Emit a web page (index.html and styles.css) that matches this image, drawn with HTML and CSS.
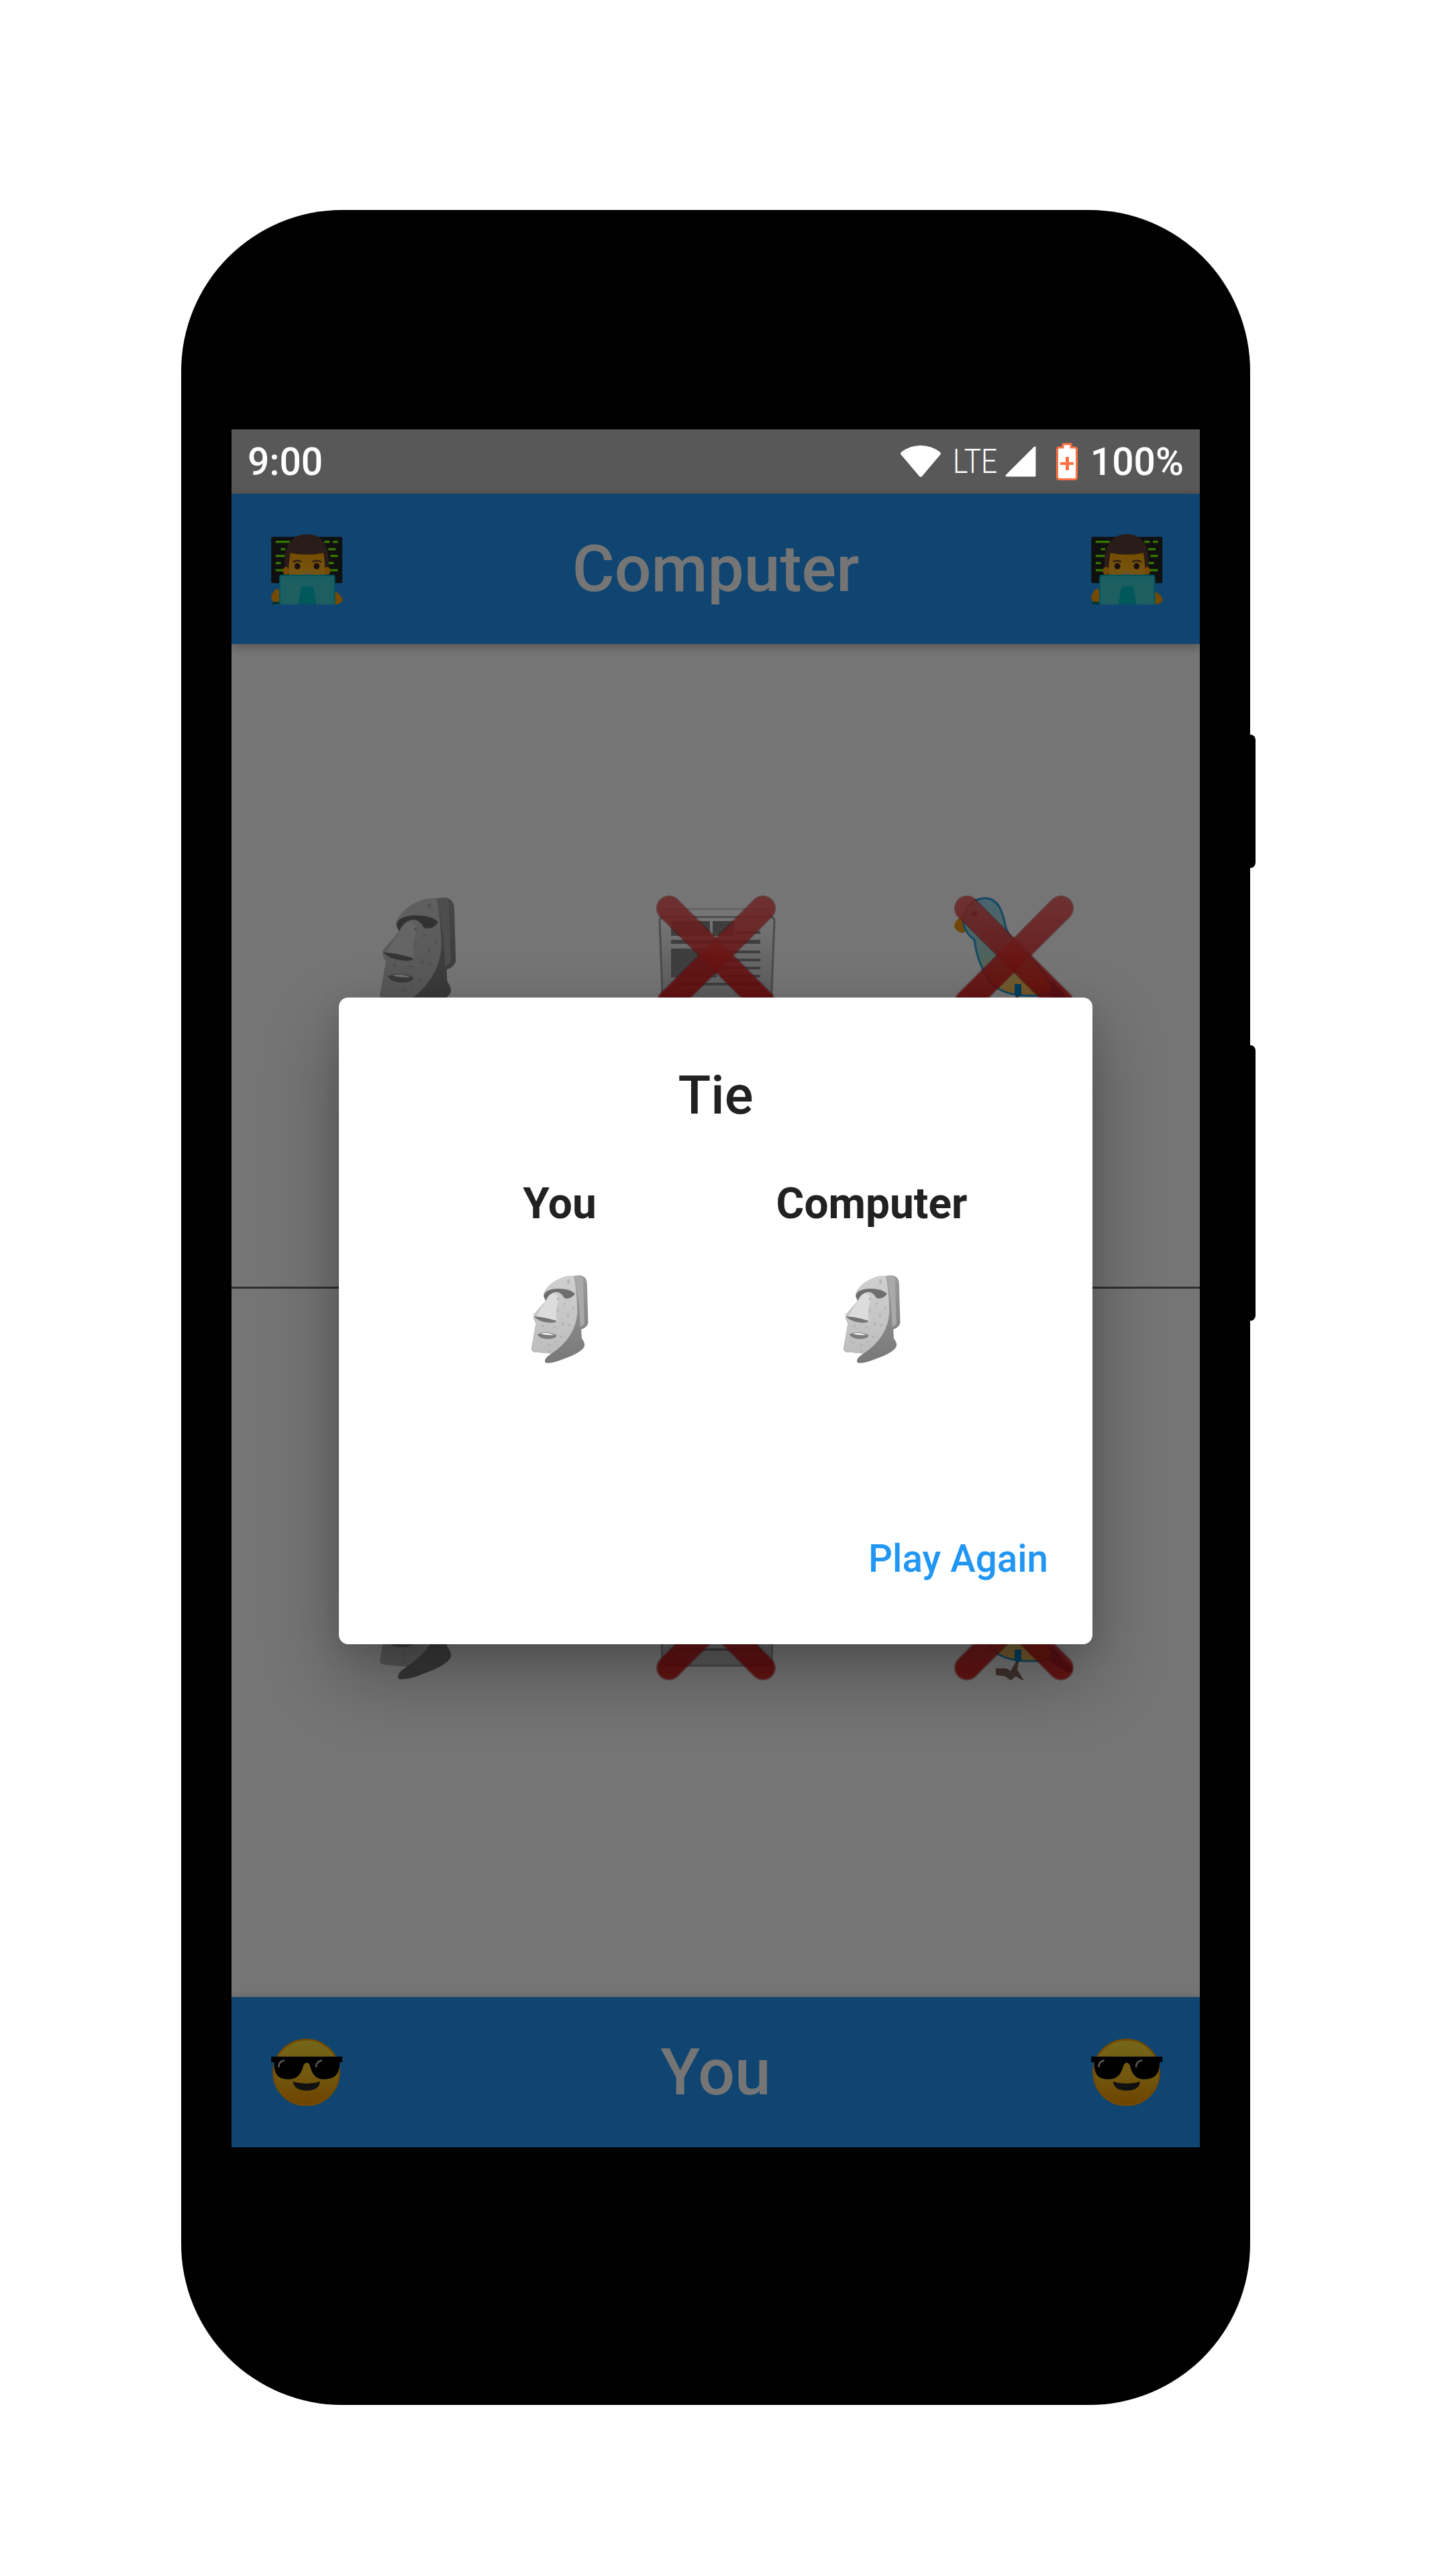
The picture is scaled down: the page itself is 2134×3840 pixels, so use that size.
FILE: index.html
```html
<!DOCTYPE html>
<html lang="en">
<head>
    <meta charset="UTF-8">
    <title>Tie</title>
    <link rel="stylesheet" href="styles.css">
</head>
<body>
    <!-- Emoji drawn once and reused below -->
    <svg class="defs" aria-hidden="true">
        <defs>
            <linearGradient id="moaiFace" x1="0" y1="0" x2="0" y2="1">
                <stop offset="0" stop-color="#d0d0d0"/>
                <stop offset="1" stop-color="#bdbdbd"/>
            </linearGradient>
            <linearGradient id="moaiBack" x1="0" y1="0" x2="0" y2="1">
                <stop offset="0" stop-color="#9a9a9a"/>
                <stop offset="1" stop-color="#787878"/>
            </linearGradient>
            <linearGradient id="crossRed" x1="0" y1="0" x2="0" y2="1">
                <stop offset="0" stop-color="#f85a5a"/>
                <stop offset="1" stop-color="#e00808"/>
            </linearGradient>
            <linearGradient id="paperShade" x1="0" y1="0" x2="0" y2="1">
                <stop offset="0" stop-color="#fff"/>
                <stop offset="1" stop-color="#c4c4c4"/>
            </linearGradient>
            <linearGradient id="birdBody" x1="0" y1="0" x2="0.3" y2="1">
                <stop offset="0" stop-color="#9fdcf5"/>
                <stop offset="0.6" stop-color="#a9d8d0"/>
                <stop offset="1" stop-color="#ffc35a"/>
            </linearGradient>
            <linearGradient id="coolFace" x1="0" y1="0" x2="0" y2="1">
                <stop offset="0" stop-color="#fde03a"/>
                <stop offset="0.55" stop-color="#f8c020"/>
                <stop offset="1" stop-color="#f09000"/>
            </linearGradient>
            <linearGradient id="devFace" x1="0" y1="0" x2="0" y2="1">
                <stop offset="0" stop-color="#ffa800"/>
                <stop offset="1" stop-color="#ffb92e"/>
            </linearGradient>

            <symbol id="moai" viewBox="180 115 265 405">
                <path fill="url(#moaiBack)" d="M405 122 Q435 125 436 160 L441 335 Q438 355 410 365 L412 405 Q428 425 424 442 Q410 470 330 498 Q285 518 250 516 Q240 505 256 488 L276 474 L195 466 Q182 458 186 448 L206 336 Q190 318 196 298 L250 236 Q235 215 242 200 Q265 150 340 126 Z"/>
                <path fill="#a9a9a9" d="M376 124 L405 122 Q418 124 418 150 L424 340 L405 355 Q404 300 398 240 Q390 180 376 124 Z"/>
                <path fill="url(#moaiFace)" d="M376 124 Q392 200 392 290 Q385 400 276 474 L195 466 Q182 458 186 448 L206 336 Q190 318 196 298 L250 236 Q235 215 242 200 Q265 150 340 126 Z"/>
                <path fill="#dcdcdc" d="M270 205 Q300 195 310 230 Q290 280 300 330 L205 312 Q225 280 250 236 Z"/>
                <path fill="#6e6e6e" d="M242 218 Q238 190 290 182 Q355 178 382 204 Q362 232 334 224 Q315 190 288 198 Q262 205 250 236 Z"/>
                <path fill="#757575" d="M196 306 Q240 308 298 326 Q296 338 262 334 Q218 330 196 306 Z"/>
                <path fill="#7d7d7d" d="M212 388 Q250 366 300 392 Q292 410 252 408 Q222 406 212 388 Z"/>
                <path fill="#ededed" d="M226 384 Q254 374 288 390 Q254 394 226 384 Z"/>
                <g fill="#b4b4b4">
                    <ellipse cx="352" cy="150" rx="6" ry="10"/>
                    <ellipse cx="305" cy="228" rx="5" ry="7"/>
                    <ellipse cx="335" cy="250" rx="4" ry="6"/>
                    <ellipse cx="375" cy="270" rx="5" ry="8"/>
                    <ellipse cx="305" cy="278" rx="5" ry="6"/>
                    <ellipse cx="350" cy="300" rx="5" ry="9"/>
                    <ellipse cx="328" cy="340" rx="6" ry="8"/>
                    <ellipse cx="355" cy="345" rx="8" ry="5"/>
                    <ellipse cx="235" cy="350" rx="6" ry="7"/>
                    <ellipse cx="290" cy="355" rx="9" ry="4"/>
                    <ellipse cx="320" cy="398" rx="7" ry="6"/>
                    <ellipse cx="265" cy="435" rx="8" ry="5"/>
                    <ellipse cx="225" cy="425" rx="5" ry="4"/>
                    <ellipse cx="295" cy="420" rx="6" ry="4"/>
                    <ellipse cx="265" cy="460" rx="9" ry="4"/>
                </g>
            </symbol>

            <symbol id="newspaper" viewBox="0 0 178 178">
                <rect x="8" y="20" width="160" height="134" rx="3" fill="#ffffff" stroke="#c8c8c8" stroke-width="2"/>
                <path d="M12 32 H170 Q176 32 176 38 L172 146 Q172 156 162 156 H18 Q9 156 9 146 L5 38 Q5 32 12 32 Z" fill="url(#paperShade)" stroke="#a4a4a4" stroke-width="3"/>
                <g fill="#888">
                    <rect x="22" y="38" width="58" height="22"/>
                    <rect x="84" y="38" width="32" height="22"/>
                    <rect x="120" y="53" width="35" height="4"/>
                    <rect x="22" y="66" width="133" height="6"/>
                    <rect x="22" y="79" width="68" height="43"/>
                    <rect x="96" y="82" width="59" height="4"/>
                    <rect x="96" y="94" width="59" height="4"/>
                    <rect x="96" y="106" width="59" height="4"/>
                    <rect x="96" y="118" width="59" height="4"/>
                    <rect x="30" y="130" width="125" height="4"/>
                </g>
            </symbol>

            <symbol id="bird" viewBox="0 0 178 178">
                <path fill="#0b8fcf" d="M146 128 L176 160 Q178 168 168 166 L130 140 Z"/>
                <path fill="#f39c12" d="M15 30 Q0 36 0 46 Q2 54 14 56 L22 42 Z"/>
                <path fill="url(#birdBody)" stroke="#2d9fd6" stroke-width="3" d="M14 38 C14 14 32 4 46 4 C66 4 72 24 76 44 C82 70 110 84 124 104 C138 120 150 136 142 146 C128 150 70 156 50 124 C38 104 32 84 30 66 C20 58 14 50 14 38 Z"/>
                <circle cx="30" cy="27" r="4" fill="#3a2a2a"/>
                <path fill="#0288d1" d="M90 132 L100 132 L100 148 Q95 154 90 148 Z"/>
                <path fill="#8d6e63" d="M92 150 L96 150 L94 162 L104 178 L98 176 L92 172 L84 178 L76 172 L62 170 L62 160 L78 160 L84 164 Z"/>
            </symbol>

            <symbol id="cross" viewBox="0 0 178 178">
                <g fill="none" stroke-linecap="round">
                    <path d="M19 19 L159 159" stroke="#b71c1c" stroke-width="38" opacity="0.55"/>
                    <path d="M159 19 L19 159" stroke="#b71c1c" stroke-width="38" opacity="0.55"/>
                    <path d="M19 19 L159 159.01" stroke="url(#crossRed)" stroke-width="34" opacity="0.7"/>
                    <path d="M159 19 L19 159.01" stroke="url(#crossRed)" stroke-width="34" opacity="0.7"/>
                </g>
            </symbol>

            <symbol id="dev" viewBox="72 75 320 315">
                <rect x="72" y="88" width="318" height="207" rx="6" fill="#242424"/>
                <g fill="#76ff03">
                    <rect x="92" y="105" width="63" height="10"/>
                    <rect x="115" y="138" width="20" height="10"/>
                    <rect x="92" y="168" width="41" height="10"/>
                    <rect x="92" y="200" width="23" height="10"/>
                    <rect x="92" y="232" width="41" height="10"/>
                    <rect x="310" y="105" width="23" height="10"/>
                    <rect x="348" y="105" width="22" height="10"/>
                    <rect x="327" y="138" width="33" height="10"/>
                    <rect x="337" y="168" width="33" height="10"/>
                    <rect x="327" y="200" width="25" height="10"/>
                    <rect x="327" y="232" width="43" height="10"/>
                </g>
                <path fill="#5d4037" d="M132 235 C124 120 170 76 232 76 C294 76 338 120 328 235 Z"/>
                <ellipse cx="138" cy="240" rx="14" ry="18" fill="#ffa000"/>
                <ellipse cx="322" cy="240" rx="14" ry="18" fill="#ffa000"/>
                <path fill="url(#devFace)" d="M150 262 C150 220 152 190 158 160 Q230 175 305 160 C312 190 312 220 312 262 Z"/>
                <path d="M170 200 Q188 188 206 200" fill="none" stroke="#5d4037" stroke-width="7"/>
                <path d="M256 200 Q274 188 296 200" fill="none" stroke="#5d4037" stroke-width="7"/>
                <ellipse cx="189" cy="219" rx="13" ry="14" fill="#3e2723"/>
                <ellipse cx="275" cy="219" rx="13" ry="14" fill="#3e2723"/>
                <path d="M212 250 Q232 240 252 250 L252 262 L212 262 Z" fill="#e8b060"/>
                <path fill="#ffa000" d="M96 318 Q74 340 72 358 Q74 382 100 388 L116 388 L116 330 Z"/>
                <path fill="#ffa000" d="M362 334 Q388 352 392 370 Q384 388 362 390 L350 390 L350 340 Z"/>
                <rect x="76" y="378" width="34" height="12" fill="#00796b"/>
                <path fill="#00bcd4" d="M118 257 H348 Q358 257 358 268 V390 H108 V268 Q108 257 118 257 Z"/>
                <path fill="#40cdd4" d="M118 264 H348 Q352 264 352 270 V390 H114 V270 Q114 264 118 264 Z"/>
                <path fill="#00bfc8" d="M212 310 H254 Q262 310 264 330 L274 390 H192 L204 330 Q206 310 212 310 Z"/>
            </symbol>

            <symbol id="cool" viewBox="72 52 322 302">
                <circle cx="230" cy="204" r="148" fill="url(#coolFace)" stroke="#ffa000" stroke-width="8"/>
                <path fill="#000" d="M72 133 H392 V158 H380 C380 210 360 235 310 235 C270 235 255 210 245 170 Q232 150 218 170 C208 210 190 235 150 235 C100 235 85 210 85 158 H72 Z"/>
                <path d="M106 178 Q106 156 128 150" fill="none" stroke="#bdbdbd" stroke-width="8" stroke-linecap="round"/>
                <path d="M274 178 Q274 156 298 150" fill="none" stroke="#bdbdbd" stroke-width="8" stroke-linecap="round"/>
                <path fill="#262626" d="M170 245 Q230 264 292 245 Q288 285 230 286 Q176 285 170 245 Z"/>
            </symbol>
        </defs>
    </svg>

    <div class="phone">
        <div class="side-btn power"></div>
        <div class="side-btn volume"></div>

        <div class="screen">
            <div class="status-bar">
                <span class="clock">9:00</span>
                <div class="status-icons">
                    <svg class="wifi" viewBox="0 0 62 48"><path fill="#fff" d="M2 10 Q15 0 31 0 Q47 0 60 10 Q62 12 60 14 L33 46 Q31 48 29 46 L2 14 Q0 12 2 10 Z"/></svg>
                    <span class="lte">LTE</span>
                    <svg class="signal" viewBox="0 0 46 46"><path fill="#fff" stroke="#fff" stroke-width="3" stroke-linejoin="round" d="M44 2 V44 H2 Z"/></svg>
                    <svg class="battery" viewBox="0 0 32 56">
                        <path fill="#fff" stroke="#ff7043" stroke-width="3" d="M10 2 H22 V7 H27 Q30.500 7 30.500 10 V51 Q30.500 54.500 27 54.500 H5 Q1.500 54.500 1.500 51 V10 Q1.500 7 5 7 H10 Z"/>
                        <path fill="#ff7043" d="M14 21 H19 V29 H26 V33 H19 V41 H14 V33 H6 V29 H14 Z"/>
                    </svg>
                    <span class="percent">100%</span>
                </div>
            </div>

            <div class="game">
                <header class="bar">
                    <svg class="bar-icon dev"><use href="#dev"/></svg>
                    <span class="bar-title">Computer</span>
                    <svg class="bar-icon dev end"><use href="#dev"/></svg>
                </header>

                <div class="board">
                    <div class="side top-side">
                        <div class="cell"><svg class="emoji moai"><use href="#moai"/></svg></div>
                        <div class="cell">
                            <svg class="emoji"><use href="#newspaper"/></svg>
                            <svg class="emoji"><use href="#cross"/></svg>
                        </div>
                        <div class="cell">
                            <svg class="emoji"><use href="#bird"/></svg>
                            <svg class="emoji"><use href="#cross"/></svg>
                        </div>
                    </div>
                    <div class="side bottom-side">
                        <div class="cell"><svg class="emoji moai"><use href="#moai"/></svg></div>
                        <div class="cell">
                            <svg class="emoji"><use href="#newspaper"/></svg>
                            <svg class="emoji"><use href="#cross"/></svg>
                        </div>
                        <div class="cell">
                            <svg class="emoji"><use href="#bird"/></svg>
                            <svg class="emoji"><use href="#cross"/></svg>
                        </div>
                    </div>
                </div>

                <footer class="bar">
                    <svg class="bar-icon cool"><use href="#cool"/></svg>
                    <span class="bar-title">You</span>
                    <svg class="bar-icon cool end"><use href="#cool"/></svg>
                </footer>

                <!-- Dark layer and result dialog -->
                <div class="barrier">
                    <div class="dialog">
                        <h2 class="dialog-title">Tie</h2>
                        <div class="picks">
                            <div class="pick">
                                <span class="pick-name">You</span>
                                <svg class="pick-emoji"><use href="#moai"/></svg>
                            </div>
                            <div class="pick">
                                <span class="pick-name">Computer</span>
                                <svg class="pick-emoji"><use href="#moai"/></svg>
                            </div>
                        </div>
                        <div class="actions">
                            <span class="play-again">Play Again</span>
                        </div>
                    </div>
                </div>
            </div>
        </div>
    </div>
</body>
</html>
```

FILE: styles.css
```css
body {
    margin: 0;
    background-color: #fff;
    font-family: Roboto, "Liberation Sans", sans-serif;
}
.defs {
    display: block;
    width: 0;
    height: 0;
}
.phone {
    position: relative;
    box-sizing: border-box;
    width: 1593px;
    height: 3272px;
    margin: 313px 0 0 270px;
    padding: 327px 75px 0;
    background-color: #000;
    border-radius: 240px;
}
.side-btn {
    position: absolute;
    right: -8px;
    width: 8px;
    background-color: #000;
    border-radius: 0 10px 10px 0;
}
.power {
    top: 782px;
    height: 199px;
}
.volume {
    top: 1245px;
    height: 411px;
}
.screen {
    width: 1443px;
    height: 2561px;
    display: flex;
    flex-direction: column;
}

/* Status bar */
.status-bar {
    height: 96px;
    flex-shrink: 0;
    display: flex;
    align-items: center;
    justify-content: space-between;
    padding: 0 24px 0 24px;
    background-color: #585858;
    color: #fff;
}
.clock, .percent {
    font-size: 57px;
    font-weight: 500;
    line-height: 1;
}
.status-icons {
    display: flex;
    align-items: center;
}
.wifi {
    width: 62px;
    height: 48px;
}
.lte {
    width: 69px;
    margin-left: 17px;
    font-size: 50px;
    font-weight: 300;
    line-height: 1;
    white-space: nowrap;
    transform: scaleX(0.85);
    transform-origin: left center;
}
.signal {
    width: 46px;
    height: 46px;
    margin-left: 9px;
}
.battery {
    width: 32px;
    height: 56px;
    margin-left: 30px;
}
.percent {
    margin-left: 19px;
}

/* Game */
.game {
    position: relative;
    flex: 1;
    display: flex;
    flex-direction: column;
    background-color: #fff;
}
.bar {
    position: relative;
    height: 224px;
    flex-shrink: 0;
    display: grid;
    grid-template-columns: 1fr auto 1fr;
    align-items: center;
    padding: 0 55px;
    background-color: #2196f3;
    box-shadow: 0 4px 14px rgba(0, 0, 0, 0.3);
    color: #fff;
}
.bar-icon {
    width: 107px;
    margin-left: 4px;
}
.bar-icon.dev {
    height: 105px;
}
.bar-icon.cool {
    height: 100px;
}
.bar-icon.end {
    justify-self: end;
    margin-left: 0;
}
.bar-title {
    font-size: 96.5px;
    font-weight: 500;
    line-height: 1;
}
.board {
    flex: 1;
}
.side {
    box-sizing: border-box;
    display: flex;
    justify-content: center;
    align-items: center;
}
.top-side {
    height: 961px;
    padding-bottom: 30px;
    border-bottom: 3px solid #666;
}
.bottom-side {
    height: 1056px;
    padding-bottom: 67px;
}
.cell {
    width: 444px;
    display: grid;
    place-items: center;
}
.emoji {
    grid-area: 1 / 1;
    width: 178px;
    height: 178px;
}
.emoji.moai {
    width: 117px;
    height: 179px;
}

/* Dialog */
.barrier {
    position: absolute;
    top: 0;
    left: 0;
    right: 0;
    bottom: 0;
    display: flex;
    align-items: center;
    justify-content: center;
    background-color: rgba(0, 0, 0, 0.54);
}
.dialog {
    box-sizing: border-box;
    width: 1123px;
    height: 964px;
    display: flex;
    flex-direction: column;
    padding-top: 106px;
    background-color: #fff;
    border-radius: 14px;
    box-shadow: 0 48px 110px rgba(0, 0, 0, 0.3), 0 10px 40px rgba(0, 0, 0, 0.1);
    color: #212121;
}
.dialog-title {
    margin: 0;
    font-size: 80px;
    font-weight: 500;
    line-height: 1;
    text-align: center;
}
.picks {
    display: flex;
    justify-content: center;
    margin-top: 90px;
}
.pick {
    width: 465px;
    display: flex;
    flex-direction: column;
    align-items: center;
}
.pick-name {
    font-size: 64px;
    font-weight: 700;
    line-height: 1;
}
.pick-emoji {
    width: 88px;
    height: 134px;
    margin-top: 72px;
}
.actions {
    margin-top: auto;
    padding: 0 66px 98px 0;
    display: flex;
    justify-content: flex-end;
}
.play-again {
    font-size: 56.5px;
    font-weight: 500;
    line-height: 1;
    color: #2196f3;
}
```
